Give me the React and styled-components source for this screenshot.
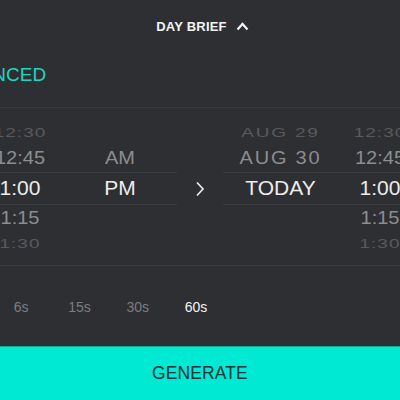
import React from "react";
import styled, { createGlobalStyle, css } from "styled-components";

const GlobalStyle = createGlobalStyle`
  html, body {
    margin: 0;
    padding: 0;
    background: #2e2f32;
  }
`;

const Screen = styled.div`
  width: 400px;
  height: 400px;
  overflow: hidden;
  display: flex;
  flex-direction: column;
  background: #2e2f32;
  font-family: "Liberation Sans", Arial, sans-serif;
  color: #f0f0f0;
`;

const Header = styled.div`
  height: 52px;
  display: flex;
  align-items: center;
  justify-content: center;
  gap: 9px;
  padding-left: 5px;
`;

const Title = styled.span`
  font-size: 13px;
  font-weight: 700;
  letter-spacing: 0.2px;
  color: #f4f4f4;
`;

const ModeRow = styled.div`
  height: 56px;
  display: flex;
  align-items: center;
  padding-bottom: 9px;
  border-bottom: 1px solid #393a3d;
  box-sizing: border-box;
`;

const ModeLabel = styled.span`
  margin-left: -58px;
  font-size: 19px;
  color: #1fd6c2;
`;

const PickerArea = styled.div`
  height: 158px;
  box-sizing: border-box;
  padding: 13px 0 9px;
  display: flex;
  border-bottom: 1px solid #393a3d;
`;

const Wheel = styled.div`
  flex: none;
  display: flex;
  flex-direction: column;
  width: ${(p) => p.$width}px;
  margin-left: ${(p) => p.$offset || 0}px;
`;

const rowLevels = {
  far: css`
    height: 24px;
    font-size: 19px;
    letter-spacing: 1px;
    color: #595a5d;
    & > span {
      transform: scaleY(0.72);
    }
  `,
  near: css`
    height: 28px;
    font-size: 20px;
    color: #8c8d90;
    & > span {
      transform: scaleY(0.9);
    }
  `,
  selected: css`
    height: 33px;
    font-size: 21px;
    color: #ececec;
    border-top: 1px solid #3b3c3f;
    border-bottom: 1px solid #3b3c3f;
  `,
};

const WheelRow = styled.div`
  display: grid;
  grid-template-columns: ${(p) => p.$cols};
  align-items: center;
  box-sizing: border-box;
  ${(p) => rowLevels[p.$level]}
`;

const Cell = styled.span`
  display: block;
  text-align: center;
  white-space: nowrap;
  padding-left: ${(p) => p.$shift || 0}px;
  ${(p) => p.$spaced && "letter-spacing: 1.8px;"}
`;

const ChevronCol = styled.div`
  flex: none;
  width: 46px;
  display: flex;
  align-items: center;
  justify-content: center;
`;

const Durations = styled.div`
  height: 78px;
  display: flex;
  align-items: center;
  margin-left: -8px;
  padding-top: 2px;
`;

const Duration = styled.span`
  width: 58.3px;
  flex: none;
  text-align: center;
  font-size: 14px;
  color: ${(p) => (p.$active ? "#f4f4f4" : "#7c7d80")};
`;

const GenerateButton = styled.div`
  flex: 1;
  display: flex;
  align-items: center;
  justify-content: center;
  background: #00e9d2;
  border-top: 1px solid #17a598;
  font-size: 17.5px;
  letter-spacing: 0.1px;
  color: #163437;
`;

const levels = ["far", "near", "selected", "near", "far"];

const leftRows = [
  ["12:30", ""],
  ["12:45", "AM"],
  ["1:00", "PM"],
  ["1:15", ""],
  ["1:30", ""],
];

const rightRows = [
  ["AUG 29", "12:30"],
  ["AUG 30", "12:45"],
  ["TODAY", "1:00"],
  ["", "1:15"],
  ["", "1:30"],
];

const durations = ["6s", "15s", "30s", "60s"];

export default function App() {
  return (
    <Screen>
      <GlobalStyle />
      <Header>
        <Title>DAY BRIEF</Title>
        <svg width="13" height="9" viewBox="0 0 13 9">
          <polyline
            points="1.5,7.5 6.5,2 11.5,7.5"
            fill="none"
            stroke="#f4f4f4"
            strokeWidth="2.2"
          />
        </svg>
      </Header>
      <ModeRow>
        <ModeLabel>ADVANCED</ModeLabel>
      </ModeRow>
      <PickerArea>
        <Wheel $width={197} $offset={-20}>
          {leftRows.map((r, i) => (
            <WheelRow key={i} $level={levels[i]} $cols="80px 1fr">
              <Cell>{r[0]}</Cell>
              <Cell $shift={3}>{r[1]}</Cell>
            </WheelRow>
          ))}
        </Wheel>
        <ChevronCol>
          <svg width="10" height="16" viewBox="0 0 10 16">
            <polyline
              points="2,1.5 8,8 2,14.5"
              fill="none"
              stroke="#f0f0f0"
              strokeWidth="1.6"
            />
          </svg>
        </ChevronCol>
        <Wheel $width={199}>
          {rightRows.map((r, i) => (
            <WheelRow key={i} $level={levels[i]} $cols="115px 84px">
              <Cell $spaced={levels[i] !== "selected"}>{r[0]}</Cell>
              <Cell>{r[1]}</Cell>
            </WheelRow>
          ))}
        </Wheel>
      </PickerArea>
      <Durations>
        {durations.map((d) => (
          <Duration key={d} $active={d === "60s"}>
            {d}
          </Duration>
        ))}
      </Durations>
      <GenerateButton>GENERATE</GenerateButton>
    </Screen>
  );
}
